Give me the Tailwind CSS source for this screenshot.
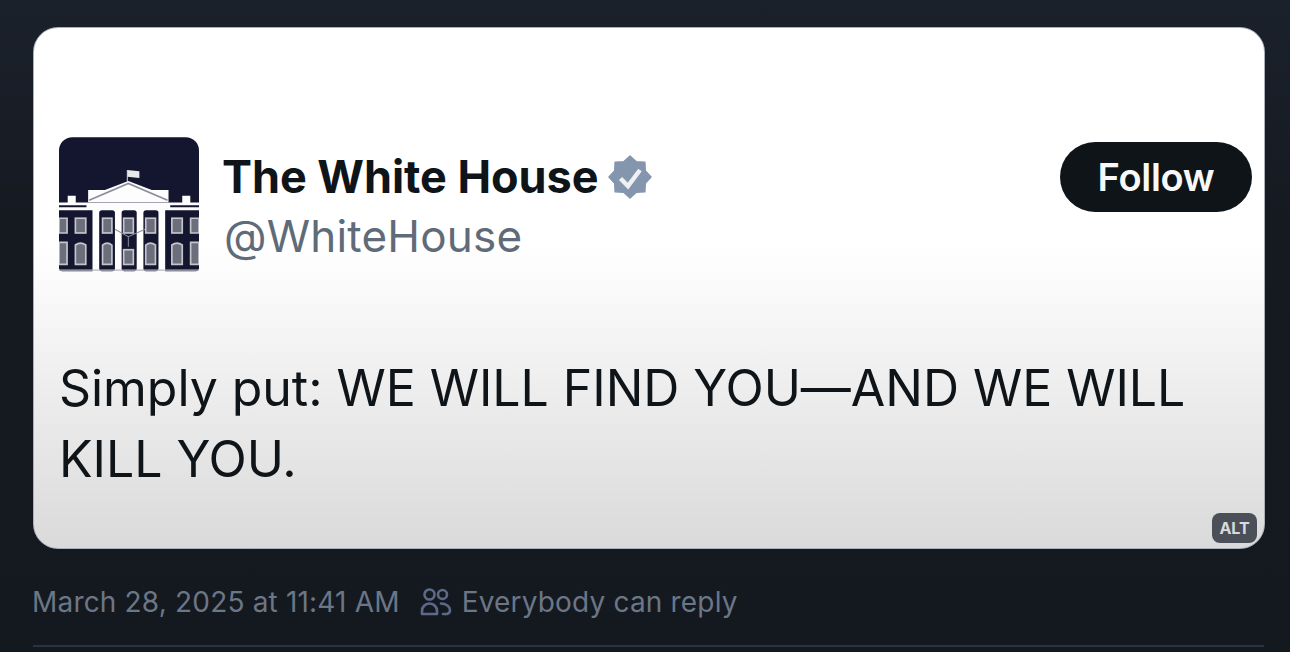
<!DOCTYPE html>
<html lang="en">
<head>
<meta charset="utf-8">
<script src="https://cdn.jsdelivr.net/npm/@tailwindcss/browser@4"></script>
<title>Post</title>
</head>
<body class="m-0 h-[652px] w-[1290px] overflow-hidden bg-gradient-to-b from-[#1b212b] via-[#151a21] via-[35%] to-[#141920] font-['Inter',sans-serif]">
<main class="flex h-[652px] flex-col px-[33px] pt-[27px] pr-[26px]">
  <section class="relative h-[522px] w-[1232px] shrink-0 rounded-[25px] border border-[#aab0ba] bg-gradient-to-b from-white from-[42%] to-[#dadada] pl-[25px] pr-[12px] pt-[109px]">
    <header class="flex items-start justify-between">
      <div class="flex items-start gap-[25px]">
        <svg class="shrink-0" width="140" height="135" viewBox="58 50 418 402" aria-hidden="true">
          <path d="M58 262V90a40 40 0 0 1 40-40h338a40 40 0 0 1 40 40v172z" fill="#14152f"/>
          <path d="M262 148l36 4v20l-36-4z" fill="#e8e8ea"/>
          <path d="M262 148v35" stroke="#d8d8dc" stroke-width="3"/>
          <path d="M58 245h418v22H58z" fill="#fdfdfd"/>
          <path d="M145 208h50l70-27 70 27h50v36H145z" fill="#fdfdfd"/>
          <path d="M148 238l117-50 117 50" fill="none" stroke="#8b8d9c" stroke-width="5"/>
          <path d="M84 225h24v25H84zM426 225h24v25h-24z" fill="#fdfdfd"/>
          <path d="M58 256h82M390 256h86" stroke="#14152f" stroke-width="6"/>
          <path d="M58 268h100v182H68a10 10 0 0 1-10-10zM375 268h101v172a10 10 0 0 1-10 10h-91z" fill="#14152f"/>
          <rect x="178" y="268" width="47" height="182" rx="8" fill="#14152f"/>
          <rect x="245" y="268" width="45" height="182" rx="8" fill="#14152f"/>
          <rect x="310" y="268" width="45" height="182" rx="8" fill="#14152f"/>
          <g fill="#6c6e7c" stroke="#c4c5cc" stroke-width="5">
            <path d="M58 292h24v44H58zM58 364h24v66H58z"/>
            <rect x="107" y="292" width="31" height="44"/>
            <path d="M107 430v-58q15-12 31 0v58z"/>
            <rect x="188" y="292" width="28" height="44"/>
            <path d="M188 430v-58q14-12 28 0v58z"/>
            <rect x="251" y="292" width="29" height="44"/>
            <rect x="251" y="386" width="29" height="44"/>
            <rect x="317" y="292" width="29" height="44"/>
            <path d="M317 430v-58q14-12 29 0v58z"/>
            <rect x="395" y="292" width="31" height="44"/>
            <path d="M395 430v-58q15-12 31 0v58z"/>
            <path d="M476 292h-25v44h25zM476 364h-25v66h25z"/>
          </g>
          <path d="M225 325l40 22 50-22M265 347v30" fill="none" stroke="#8b8d9c" stroke-width="3"/>
          <path d="M58 447h418" stroke="#b9bac2" stroke-width="4"/>
        </svg>
        <div class="flex flex-col pt-[10px]">
          <div class="flex items-center gap-[10px]">
            <h1 class="-ml-[2px] text-[45px] leading-[60px] font-bold tracking-[-0.05px] text-[#0f1419]">The White House</h1>
            <svg width="44" height="44" viewBox="0 0 44 44" aria-hidden="true">
              <path d="M43 22l-5.750 6.310-.4 8.540-8.540.4L22 43l-6.310-5.750-8.540-.4-.4-8.540L1 22l5.750-6.310.4-8.540 8.540-.4L22 1l6.310 5.750 8.540.4.4 8.540z" fill="#8495ae" stroke="#8495ae" stroke-width="1.500" stroke-linejoin="round"/>
              <path d="M12.500 23.500l7.500 7.500L32 15" fill="none" stroke="#eef0f4" stroke-width="4.500"/>
            </svg>
          </div>
          <p class="-mt-[1px] text-[44px] leading-[60px] font-normal tracking-[0.2px] text-[#5f6b78]">@WhiteHouse</p>
        </div>
      </div>
      <button class="mt-[5px] flex h-[70px] w-[192px] items-center justify-center rounded-full bg-[#0f1419] text-[38px] font-semibold tracking-[-0.3px] text-[#f7f9f9]">Follow</button>
    </header>
    <p class="mt-[81px] w-[1190px] text-[50px] leading-[71px] font-normal tracking-[-0.05px] text-[#0f1419]">Simply put: WE WILL FIND YOU—AND WE WILL KILL YOU.</p>
    <span class="absolute right-[7px] bottom-[5px] flex h-[30px] w-[45px] items-center justify-center rounded-[8px] bg-[#4b5058] text-[16px] font-bold text-[#d8dadd]">ALT</span>
  </section>
  <footer class="mt-[35px] flex h-[36px] w-[1231px] shrink-0 items-center text-[28px] leading-[36px] tracking-[0.18px] text-[#6b7686]">
    <time class="-ml-[1px]">March 28, 2025 at 11:41 AM</time>
    <svg class="ml-[20px] mr-[9px]" width="33" height="30" viewBox="0 0 33 30" fill="none" stroke="#5c6a88" stroke-width="2.6" aria-hidden="true">
      <circle cx="9.5" cy="7.5" r="5"/>
      <circle cx="22.5" cy="7.5" r="4.5"/>
      <path d="M2 27v-3c0-4 3-7.500 7.500-7.500S17 20 17 24v3z" stroke-linejoin="round"/>
      <path d="M21 16.500c5 0 9 3 9 6.500 0 2-1 3.500-3 4h-4" stroke-linecap="round"/>
    </svg>
    <span>Everybody can reply</span>
  </footer>
  <hr class="mt-[25px] h-[2px] w-[1231px] shrink-0 border-0 bg-[#2a3340]">
</main>
</body>
</html>
